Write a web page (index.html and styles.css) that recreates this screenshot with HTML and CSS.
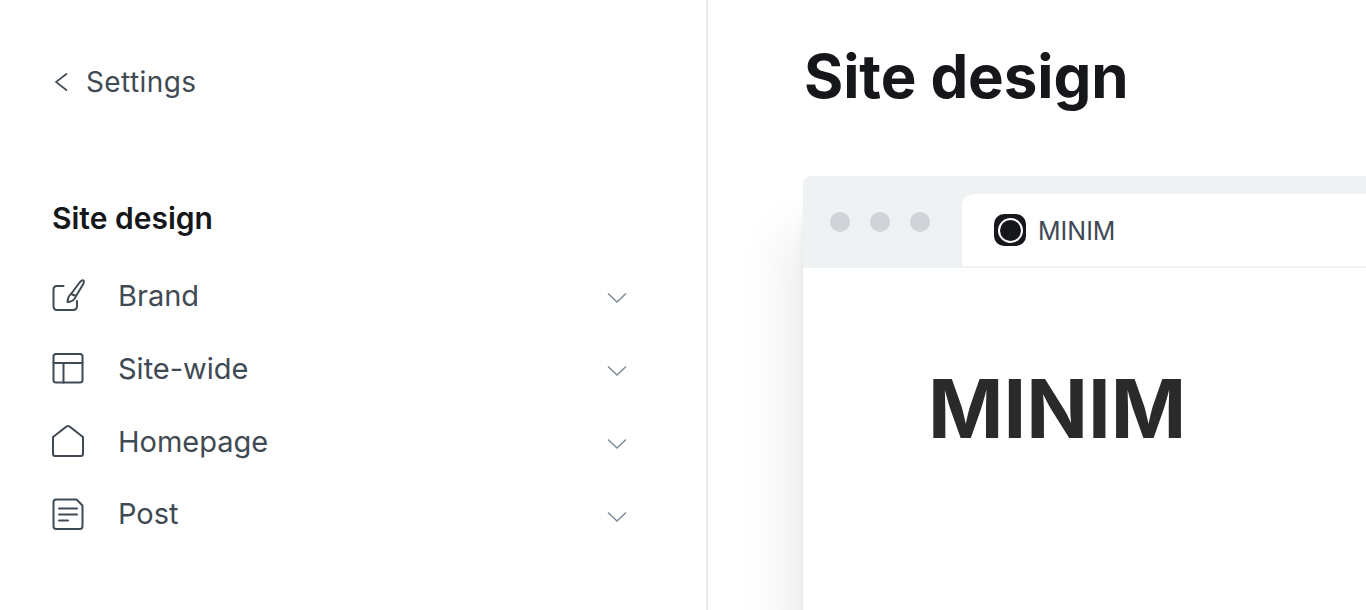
FILE: index.html
```html
<!DOCTYPE html>
<html lang="en">
  <head>
    <meta charset="UTF-8" />
    <meta name="viewport" content="width=device-width, initial-scale=1.0" />
    <title>Site design</title>
    <link rel="stylesheet" href="styles.css">
  </head>
  <body>
    <aside class="sidebar">
      <a class="back-link" href="#">
        <svg class="back-icon" width="18" height="22" viewBox="0 0 18 22"><path d="M15 2.5 L4 11 L15 19.5" /></svg>
        <span>Settings</span>
      </a>

      <h2 class="nav-title">Site design</h2>
      <ul class="nav-list">
        <li class="nav-item">
          <svg class="nav-icon" width="34" height="34" viewBox="0 0 34 34">
            <path d="M12.5 8 H6 Q2.5 8 2.5 11.5 V28 Q2.5 32 6 32 H22 Q26 32 26 28 V23" />
            <path d="M20 16 L29 4 Q31.5 1.5 32.5 2.5 Q33.5 4 32 6.5 L25 18" />
            <path d="M20 16 Q17 18 16.5 24 Q23 24 25 18 Z" />
          </svg>
          <span class="nav-label">Brand</span>
          <svg class="nav-chevron" width="20" height="12" viewBox="0 0 20 12"><path d="M1 1.5 L10 10 L19 1.5" /></svg>
        </li>
        <li class="nav-item">
          <svg class="nav-icon" width="34" height="34" viewBox="0 0 34 34">
            <rect x="2.5" y="3" width="29" height="28.5" rx="2.5" />
            <path d="M2.5 12 H31.5" />
            <path d="M12.5 12 V31.5" />
          </svg>
          <span class="nav-label">Site-wide</span>
          <svg class="nav-chevron" width="20" height="12" viewBox="0 0 20 12"><path d="M1 1.5 L10 10 L19 1.5" /></svg>
        </li>
        <li class="nav-item">
          <svg class="nav-icon" width="34" height="34" viewBox="0 0 34 34">
            <path d="M2 13 L15.5 2.5 Q17 1.5 18.5 2.5 L32 13 V30 Q32 32 30 32 H4 Q2 32 2 30 Z" />
          </svg>
          <span class="nav-label">Homepage</span>
          <svg class="nav-chevron" width="20" height="12" viewBox="0 0 20 12"><path d="M1 1.5 L10 10 L19 1.5" /></svg>
        </li>
        <li class="nav-item">
          <svg class="nav-icon" width="34" height="34" viewBox="0 0 34 34">
            <path d="M5 2.5 H25.5 L31.5 8.5 V29 Q31.5 32 29 32 H5 Q2.5 32 2.5 29 V5 Q2.5 2.5 5 2.5 Z" />
            <path d="M8 11.5 H26" />
            <path d="M8 17.5 H26" />
            <path d="M8 23.5 H17" />
          </svg>
          <span class="nav-label">Post</span>
          <svg class="nav-chevron" width="20" height="12" viewBox="0 0 20 12"><path d="M1 1.5 L10 10 L19 1.5" /></svg>
        </li>
      </ul>
    </aside>

    <main class="content">
      <h1 class="page-title">Site design</h1>
      <div class="browser">
        <div class="browser-bar">
          <div class="browser-dots">
            <span class="dot"></span>
            <span class="dot"></span>
            <span class="dot"></span>
          </div>
          <div class="browser-tab">
            <span class="favicon"><span class="favicon-ring"></span></span>
            <span class="tab-name">MINIM</span>
          </div>
        </div>
        <div class="browser-body">
          <div class="site-name">MINIM</div>
        </div>
      </div>
    </main>
  </body>
</html>
```

FILE: styles.css
```css
html, body {
  margin: 0;
  height: 100%;
}
body {
  display: flex;
  height: 610px;
  overflow: hidden;
  font-family: Inter, "Liberation Sans", sans-serif;
  background: #fff;
}
.sidebar {
  flex: none;
  box-sizing: content-box;
  width: 578px;
  padding: 64px 76px 0 52px;
  border-right: 2px solid #e6e8eb;
  overflow: hidden;
}
.back-link {
  display: flex;
  align-items: center;
  height: 36px;
  color: #3f4a54;
  text-decoration: none;
  font-size: 28px;
  letter-spacing: 0.4px;
}
.back-icon {
  margin-right: 16px;
  fill: none;
  stroke: #3f4a54;
  stroke-width: 1.6;
}
.nav-title {
  margin: 100px 0 0;
  color: #15171a;
  font-size: 30px;
  line-height: 36px;
  font-weight: 600;
}
.nav-list {
  list-style: none;
  margin: 23px 0 0;
  padding: 0;
}
.nav-item {
  display: flex;
  align-items: center;
  height: 72.85px;
}
.nav-icon {
  flex: none;
  margin-left: -1px;
  margin-right: 1px;
  fill: none;
  stroke: #3f4a54;
  stroke-width: 2;
  stroke-linejoin: round;
  stroke-linecap: round;
}
.nav-label {
  margin-left: 32px;
  flex: 1;
  color: #3f4a54;
  font-size: 29px;
}
.nav-chevron {
  margin-top: 6px;
  margin-right: 3px;
  fill: none;
  stroke: #7c8b9a;
  stroke-width: 1.5;
}
.content {
  flex: 1;
  min-width: 0;
  padding: 0 0 0 96px;
  background: #fff;
}
.page-title {
  margin: 41px 0 0;
  color: #15171a;
  font-size: 60px;
  line-height: 70px;
  font-weight: 700;
  letter-spacing: -0.1px;
}
.browser {
  margin-top: 65px;
  margin-left: -1px;
  height: 434px;
  border-radius: 8px 0 0 0;
  background: #fff;
  box-shadow: -20px 55px 50px rgba(0, 0, 0, 0.07), -1px 40px 8px rgba(0, 0, 0, 0.05);
}
.browser-bar {
  display: flex;
  height: 92px;
  background: #eff2f3;
  border-radius: 8px 0 0 0;
}
.browser-dots {
  display: flex;
  gap: 20px;
  padding: 36px 0 0 27px;
  width: 132px;
  box-sizing: border-box;
}
.dot {
  width: 20px;
  height: 20px;
  border-radius: 50%;
  background: #ced3d8;
}
.browser-tab {
  flex: 1;
  display: flex;
  align-items: center;
  margin: 18px 0 2px 27px;
  padding: 0 0 0 32px;
  background: #fff;
  border-radius: 12px 0 0 0;
}
.favicon {
  display: flex;
  align-items: center;
  justify-content: center;
  width: 32px;
  height: 32px;
  border-radius: 10px;
  background: #15171a;
}
.favicon-ring {
  width: 21px;
  height: 21px;
  border: 2px solid #fff;
  border-radius: 50%;
}
.tab-name {
  margin-left: 12px;
  color: #3f4a54;
  font-size: 25px;
  line-height: 34px;
  padding-top: 1px;
}
.browser-body {
  padding: 93px 0 0 125px;
}
.site-name {
  color: #2a2a2a;
  font-size: 81px;
  line-height: 96px;
  font-weight: 700;
}
```
